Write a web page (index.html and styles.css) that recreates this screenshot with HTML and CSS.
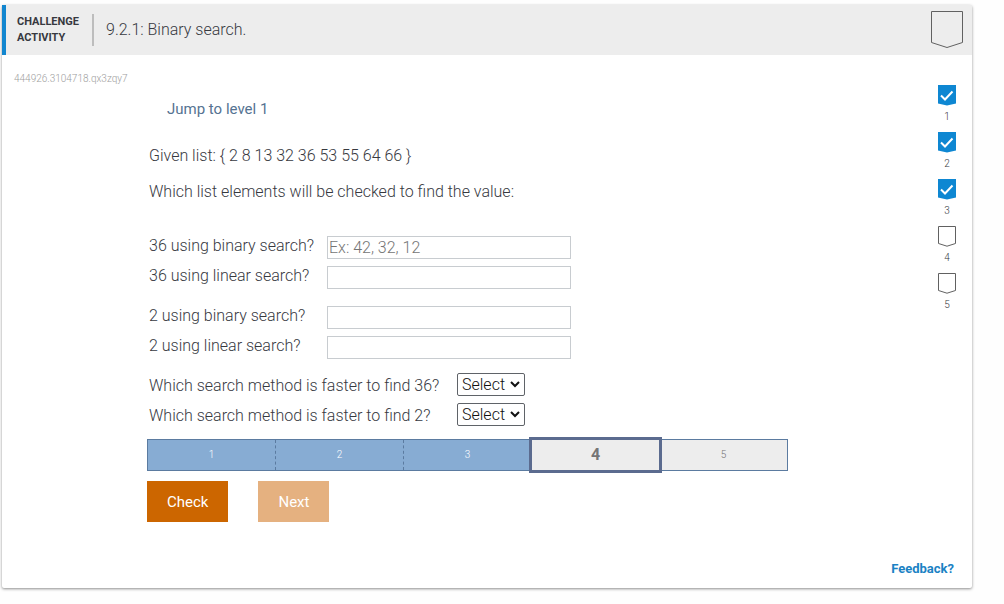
FILE: index.html
```
<!DOCTYPE html>
<html lang="en">
<head>
  <meta charset="UTF-8">
  <title>9.2.1: Binary search</title>
  <link rel="stylesheet" href="styles.css">
</head>
<body>

  <div class="card">
    <header class="card-header">
      <div class="activity-type">Challenge<br>activity</div>
      <h1>9.2.1: Binary search.</h1>
      <svg class="badge" width="34" height="38" viewBox="0 0 34 38">
        <path d="M1.5 .5h31v31L17 36.5 1.5 31.5z"/>
      </svg>
    </header>

    <div class="card-body">
      <main>
        <div class="activity-id">444926.3104718.qx3zqy7</div>

        <form class="tool">
          <a class="jump" href="#">Jump to level 1</a>
          <p>Given list: { 2 8 13 32 36 53 55 64 66 }</p>
          <p>Which list elements will be checked to find the value:</p>

          <div class="questions first">
            <label for="binary36">36 using binary search?</label>
            <input type="text" id="binary36" placeholder="Ex: 42, 32, 12">
            <label for="linear36">36 using linear search?</label>
            <input type="text" id="linear36">
          </div>

          <div class="questions">
            <label for="binary2">2 using binary search?</label>
            <input type="text" id="binary2">
            <label for="linear2">2 using linear search?</label>
            <input type="text" id="linear2">
          </div>

          <div class="questions choices">
            <label for="faster36">Which search method is faster to find 36?</label>
            <div class="select">
              <select id="faster36">
                <option>Select</option>
                <option>Binary</option>
                <option>Linear</option>
              </select>
              <svg width="10" height="7" viewBox="0 0 10 7"><path d="M1 1l4 4 4-4"/></svg>
            </div>
            <label for="faster2">Which search method is faster to find 2?</label>
            <div class="select">
              <select id="faster2">
                <option>Select</option>
                <option>Binary</option>
                <option>Linear</option>
              </select>
              <svg width="10" height="7" viewBox="0 0 10 7"><path d="M1 1l4 4 4-4"/></svg>
            </div>
          </div>

          <div class="levels">
            <div class="level done">1</div>
            <div class="level done">2</div>
            <div class="level done">3</div>
            <div class="level current">4</div>
            <div class="level">5</div>
          </div>

          <div class="button-group">
            <button type="button">Check</button>
            <button type="button" disabled>Next</button>
          </div>
        </form>
      </main>

      <aside class="steps">
        <div class="step done">
          <svg width="18" height="21" viewBox="0 0 18 21"><path d="M0 0h18v18.500L9 20.500 0 18.500z"/><path class="check" d="M3 10.500l4 4 7.500-8"/></svg>
          <span>1</span>
        </div>
        <div class="step done">
          <svg width="18" height="21" viewBox="0 0 18 21"><path d="M0 0h18v18.500L9 20.500 0 18.500z"/><path class="check" d="M3 10.500l4 4 7.500-8"/></svg>
          <span>2</span>
        </div>
        <div class="step done">
          <svg width="18" height="21" viewBox="0 0 18 21"><path d="M0 0h18v18.500L9 20.500 0 18.500z"/><path class="check" d="M3 10.500l4 4 7.500-8"/></svg>
          <span>3</span>
        </div>
        <div class="step">
          <svg width="18" height="21" viewBox="0 0 18 21"><path d="M.5.5h17v17L9 20.200.5 17.500z"/></svg>
          <span>4</span>
        </div>
        <div class="step">
          <svg width="18" height="21" viewBox="0 0 18 21"><path d="M.5.5h17v17L9 20.200.5 17.500z"/></svg>
          <span>5</span>
        </div>
      </aside>
    </div>

    <footer><a href="#">Feedback?</a></footer>
  </div>

</body>
</html>
```
FILE: styles.css
```
* {
  box-sizing: border-box;
}

body {
  margin: 0;
  padding: 5px 32px 16px 2px;
  background-color: #fefefe;
  font-family: Roboto, sans-serif;
  font-size: 16px;
  font-weight: 300;
  line-height: 20px;
  color: #37393f;
}

a {
  text-decoration: none;
}

.card {
  background-color: white;
  border-radius: 2px;
  box-shadow: 0 1px 3px rgba(0, 0, 0, 0.45);
}

.card-header {
  display: flex;
  align-items: center;
  height: 50px;
  padding: 0 8px 0 11px;
  border-left: 4px solid #1286cf;
  background-color: #ededed;
}

.activity-type {
  padding-right: 13px;
  border-right: 2px solid #bdbdbd;
  font-size: 11px;
  font-weight: 700;
  line-height: 16px;
  text-transform: uppercase;
}

h1 {
  flex: 1;
  margin: 0 0 0 12px;
  font-size: 16px;
  font-weight: 300;
}

.badge path {
  fill: none;
  stroke: #616161;
}

.card-body {
  display: flex;
}

main {
  flex: 1;
}

.activity-id {
  margin: 17px 0 13px 12px;
  font-size: 10px;
  line-height: 14px;
  color: #9e9e9e;
}

.tool {
  max-width: 641px;
  margin-left: 145px;
}

.jump {
  display: block;
  margin: 0 20px 27px;
  font-size: 15px;
  font-weight: 400;
  color: #557392;
}

p {
  margin: 0 2px 16px;
}

.questions {
  display: grid;
  grid-template-columns: 178px 244px;
  grid-auto-rows: 23px;
  row-gap: 7px;
  margin: 17px 2px 0;
}

.questions.first {
  margin-top: 34px;
}

.questions.choices {
  grid-template-columns: 308px 68px;
  margin-top: 14px;
}

input {
  padding: 0 1px;
  border: 1px solid #c8ccd0;
  font: inherit;
  color: inherit;
}

input::placeholder {
  color: #757575;
}

.choices label {
  padding-top: 3px;
}

.select {
  position: relative;
}

select {
  width: 100%;
  height: 23px;
  padding: 0 4px;
  border: 1px solid #5f6368;
  border-radius: 2px;
  appearance: none;
  background-color: white;
  font: inherit;
  color: #111;
}

/* arrow sits over the native select */
.select svg {
  position: absolute;
  top: 8px;
  right: 5px;
  fill: none;
  stroke: #111;
  stroke-width: 2;
  pointer-events: none;
}

.levels {
  display: flex;
  height: 32px;
  margin-top: 13px;
  border: 1px solid #5b7ba0;
  background-color: #ededed;
}

.level {
  flex: 1;
  font-size: 10px;
  line-height: 30px;
  text-align: center;
  color: #757575;
}

.level.done {
  background-color: #87acd3;
  color: white;
}

.level.done + .done {
  border-left: 1px dashed #5b7ba0;
}

.level.current {
  margin: -3px -2px;
  border: 3px solid #5b6b8f;
  background-color: #ededed;
  font-size: 16px;
  font-weight: 700;
  z-index: 1;
}

.button-group {
  display: flex;
  gap: 30px;
  margin-top: 10px;
}

button {
  height: 41px;
  padding: 0 20px;
  border: none;
  background-color: #cc6600;
  font: inherit;
  font-size: 15px;
  font-weight: 400;
  color: white;
}

button:disabled {
  background-color: #e5b180;
}

.steps {
  width: 50px;
  padding-top: 30px;
}

.step {
  display: flex;
  flex-direction: column;
  align-items: center;
  height: 47px;
}

.step svg {
  fill: none;
  stroke: #616161;
}

.step.done svg {
  fill: #0e87d2;
  stroke: none;
}

.step .check {
  fill: none;
  stroke: white;
  stroke-width: 2;
}

.step span {
  margin-top: 4px;
  font-size: 10px;
  line-height: 14px;
}

footer {
  padding: 36px 18px 9px;
  text-align: right;
}

footer a {
  font-size: 13px;
  font-weight: 700;
  color: #1a82c4;
}
```
